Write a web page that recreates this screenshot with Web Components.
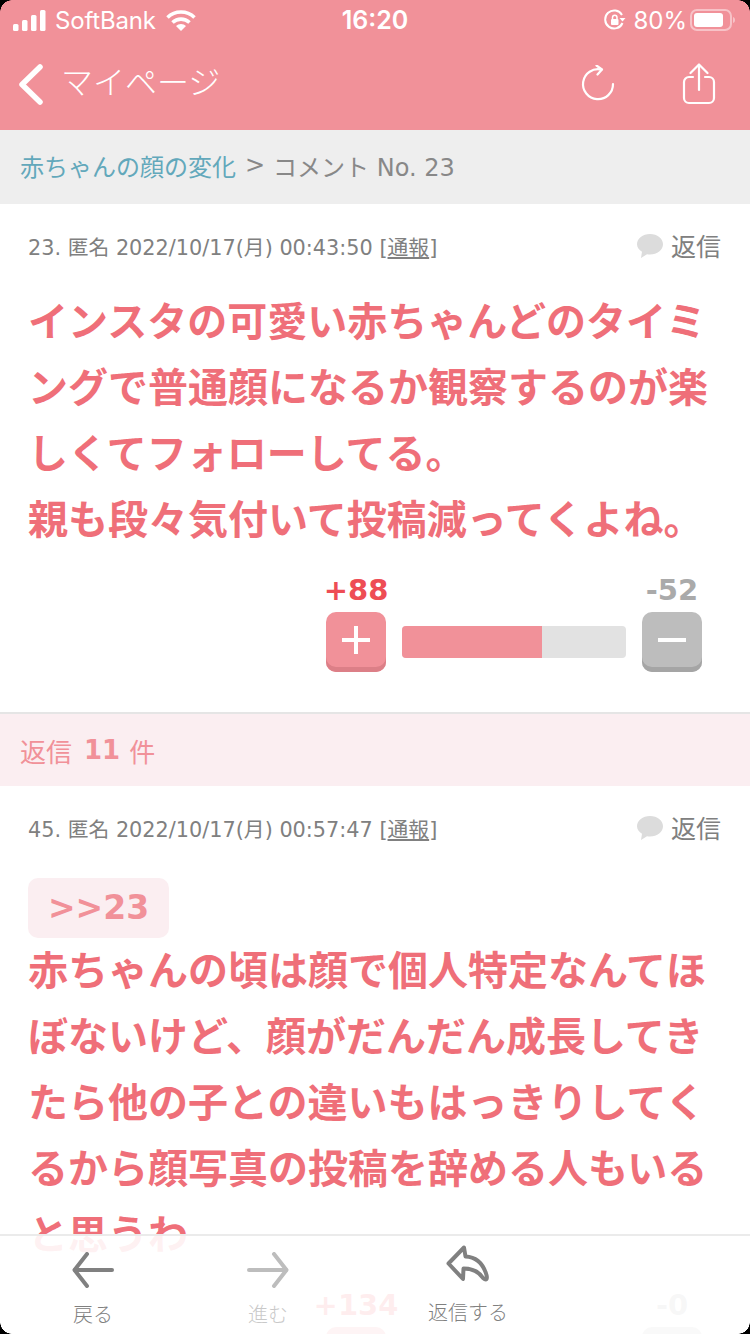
<!DOCTYPE html>
<html lang="ja"><head><meta charset="utf-8"><title>コメント</title>
<style>
html,body{margin:0;padding:0;background:#fff;}
body{font-family:"DejaVu Sans","Noto Sans CJK JP",sans-serif;width:750px;height:1334px;overflow:hidden;}
</style></head><body>
<app-screen>
  <status-bar></status-bar>
  <nav-bar title="マイページ"></nav-bar>
  <bread-crumb parent="赤ちゃんの顔の変化" current="コメント No. 23"></bread-crumb>
  <comment-card meta="23. 匿名 2022/10/17(月) 00:43:50" plus="+88" minus="-52" pct="62.5" first>インスタの可愛い赤ちゃんどのタイミングで普通顔になるか観察するのが楽しくてフォローしてる。<br>親も段々気付いて投稿減ってくよね。</comment-card>
  <reply-header count="11"></reply-header>
  <comment-card meta="45. 匿名 2022/10/17(月) 00:57:47" plus="+134" minus="-0" pct="100" quote=">>23">赤ちゃんの頃は顔で個人特定なんてほぼないけど、顔がだんだん成長してきたら他の子との違いもはっきりしてくるから顔写真の投稿を辞める人もいると思うわ</comment-card>
  <bottom-bar slot="overlay"></bottom-bar>
  <screen-corners slot="overlay"></screen-corners>
</app-screen>
<script>
const FONT='"DejaVu Sans","Noto Sans CJK JP",sans-serif';
function def(name,html,init){
  customElements.define(name,class extends HTMLElement{
    connectedCallback(){
      if(this.shadowRoot)return;
      const r=this.attachShadow({mode:'open'});
      r.innerHTML=typeof html==='function'?html(this):html;
      if(init)init(this,r);
    }
  });
}
def('app-screen',`<style>
:host{display:block;position:relative;width:750px;height:1334px;overflow:hidden;background:#fff;font-family:${FONT};}
</style><slot></slot><slot name="overlay"></slot>`);

def('status-bar',`<style>
:host{display:flex;align-items:center;height:40px;background:#f19199;color:#fff;font-family:Inter,"Liberation Sans",sans-serif;font-size:24px;position:relative;padding:0 15px 0 13px;box-sizing:border-box;}
.left,.right{display:flex;align-items:center;}
.right{margin-left:auto;}
.time{position:absolute;left:0;right:0;text-align:center;font-size:25px;font-weight:600;}
svg{display:block}
</style>
<div class="left">
<svg width="33" height="21" viewBox="0 0 33 21" fill="#fff"><rect x="0" y="14" width="5.5" height="7" rx="1.5"/><rect x="9" y="10" width="5.5" height="11" rx="1.5"/><rect x="18" y="5" width="5.5" height="16" rx="1.5"/><rect x="27" y="0" width="5.5" height="21" rx="1.5"/></svg>
<span style="margin-left:9px;letter-spacing:-.2px">SoftBank</span>
<svg style="margin-left:10px" width="30" height="21" viewBox="0 0 30 21" fill="none" stroke="#fff" stroke-width="3.6"><path d="M1.5 7.5a19.5 19.5 0 0 1 27 0"/><path d="M6.5 12.5a12.5 12.5 0 0 1 17 0"/><path d="M15 21l-5-5a7 7 0 0 1 10 0z" fill="#fff" stroke="none"/></svg>
</div>
<div class="time">16:20</div>
<div class="right">
<svg width="22" height="22" viewBox="0 0 22 22" fill="none" stroke="#fff" stroke-width="2"><path d="M18.5 14A9 9 0 1 1 18 6"/><path d="M15.5 9h6l-3 3.5z" fill="#fff" stroke="none"/><rect x="7" y="10" width="7.5" height="6" rx="1" fill="#fff" stroke="none"/><path d="M8.5 10V8.5a2.2 2.2 0 0 1 4.500 0V10" stroke-width="1.500"/></svg>
<span style="margin-left:7px">80%</span>
<svg style="margin-left:3px" width="45" height="22" viewBox="0 0 45 22"><rect x="1" y="1" width="40" height="20" rx="6" fill="none" stroke="#fff" stroke-opacity=".45" stroke-width="2"/><rect x="4" y="4" width="29" height="14" rx="3" fill="#fff"/><path d="M43 8c1.500.5 2 1.500 2 3s-.5 2.500-2 3z" fill="#fff" fill-opacity=".45"/></svg>
</div>`);

def('nav-bar',t=>`<style>
:host{display:flex;align-items:center;height:90px;background:#f19199;color:#fff;box-sizing:border-box;position:relative;}
.back{margin-left:17px;display:block}
.title{font-family:"Noto Sans CJK JP",sans-serif;font-weight:300;font-size:32px;margin-left:16px;margin-top:-10px;white-space:nowrap;}
.r{margin-left:auto;display:flex;align-items:center;margin-right:34px;}
svg{display:block}
</style>
<svg class="back" width="28" height="42" viewBox="0 0 28 42" fill="none" stroke="#fff" stroke-width="5.500" stroke-linecap="round" stroke-linejoin="round"><path d="M23 3L5 20.500 23 38"/></svg>
<span class="title">${t.getAttribute('title')}</span>
<div class="r">
<svg style="margin-top:-5px" width="34" height="36" viewBox="0 0 34 36" fill="none" stroke="#fff" stroke-width="2.200" stroke-linecap="round" stroke-linejoin="round"><path d="M20.500 4.600A15 15 0 1 0 32 19"/><path d="M15.500 0.500L21 4.500 16.500 9.500"/></svg>
<svg style="margin-left:67px;margin-top:-3px" width="34" height="42" viewBox="0 0 34 42" fill="none" stroke="#fff" stroke-width="2.200" stroke-linecap="round" stroke-linejoin="round"><path d="M11 14H7a5 5 0 0 0-5 5v16a5 5 0 0 0 5 5h20a5 5 0 0 0 5-5V19a5 5 0 0 0-5-5h-4"/><path d="M17 27V2"/><path d="M8.500 10L17 1.500 25.500 10"/></svg>
</div>`);

def('bread-crumb',t=>`<style>
:host{display:flex;align-items:center;height:74px;box-sizing:border-box;padding:0 0 4px 20px;background:#eeeeee;font-size:24px;color:#888;white-space:nowrap;}
.p{color:#62a8bb}.s{margin:0 8px 0 9px}
</style><span class="p">${t.getAttribute('parent')}</span><span class="s">&gt;</span><span>${t.getAttribute('current')}</span>`);

def('vote-bar',t=>`<style>
:host{display:grid;grid-template-columns:60px 224px 60px;column-gap:16px;row-gap:5px;justify-content:end;padding:23px 48px 40px 0;}
.n{font-weight:700;font-size:29px;line-height:34px;white-space:nowrap;justify-self:center;}
.plus{color:#ee4d55}.minus{color:#aaaaaa}
.b{width:60px;height:60px;border-radius:10px;display:flex;align-items:center;justify-content:center;box-sizing:border-box;padding-bottom:4px;}
.bp{background:#f19199;box-shadow:inset 0 -5px 0 #dc7f87;}
.bm{background:#bdbdbd;box-shadow:inset 0 -5px 0 #a5a5a5;}
.track{height:32px;align-self:start;margin-top:14px;background:#e2e2e2;border-radius:4px;overflow:hidden;}
.fill{height:100%;background:#f19199;}
svg{display:block}
</style>
<span class="n plus">${t.getAttribute('plus')}</span><span></span><span class="n minus">${t.getAttribute('minus')}</span>
<div class="b bp"><svg width="28" height="28" viewBox="0 0 28 28" fill="#fff"><rect x="12" y="0" width="4" height="28"/><rect x="0" y="12" width="28" height="4"/></svg></div>
<div class="track"><div class="fill" style="width:${t.getAttribute('pct')}%"></div></div>
<div class="b bm"><svg width="28" height="28" viewBox="0 0 28 28" fill="#fff"><rect x="0" y="12" width="28" height="4"/></svg></div>`);

def('comment-card',t=>`<style>
:host{display:block;background:#fff;${t.hasAttribute('first')?'border-bottom:2px solid #e5e5e5;':''}}
.meta{display:flex;align-items:center;height:34px;padding:26px 29px 0 28px;font-size:20.800px;color:#808080;white-space:nowrap;}
.meta>span:first-child{margin-top:-2px}
.reply{margin:-4px 0 0 auto;display:flex;align-items:center;font-size:25px;color:#808080;}
.reply svg{margin:2px 8px 0 0;display:block}
.quote{display:inline-block;box-sizing:border-box;width:141px;height:60px;margin:32px 0 -1px 28px;border-radius:10px;background:#fbeef1;color:#f19199;font-weight:700;font-size:33px;line-height:60px;text-align:center;vertical-align:top;}
.body{margin:${t.hasAttribute('quote')?'-2px':'22px'} 28px 0 28px;font-family:"Noto Sans CJK JP",sans-serif;font-weight:700;font-size:40px;line-height:66px;color:#ef6f79;}
</style>
<div class="meta"><span>${t.getAttribute('meta')} [<u>通報</u>]</span>
<span class="reply"><svg width="26" height="24" viewBox="0 0 26 24"><path d="M13 0c7.200 0 13 4.600 13 10.300S20.200 20.600 13 20.600c-1 0-2-.1-3-.3L4 24l1-6.200C2 16 0 13.300 0 10.300 0 4.600 5.800 0 13 0z" fill="#dcdcdc"/></svg>返信</span></div>
${t.hasAttribute('quote')?`<div><span class="quote">${t.getAttribute('quote').replace(/>/g,'&gt;')}</span></div>`:''}
<div class="body"><slot></slot></div>
<vote-bar plus="${t.getAttribute('plus')}" minus="${t.getAttribute('minus')}" pct="${t.getAttribute('pct')}"></vote-bar>`);

def('reply-header',t=>`<style>
:host{display:flex;align-items:center;height:72px;padding-left:20px;background:#fbeef1;color:#f19199;font-size:26px;white-space:nowrap;}
b{margin:0 9px 0 12px;font-size:26px}
</style>返信<b>${t.getAttribute('count')}</b>件`);

def('bottom-bar',`<style>
:host{position:absolute;left:0;right:0;bottom:0;height:100px;box-sizing:border-box;border-top:2px solid rgba(232,232,232,.85);background:rgba(255,255,255,.9);display:grid;grid-template-columns:186px 164px 236px 1fr;font-family:"Noto Sans CJK JP",sans-serif;font-weight:300;font-size:20px;}
.i{display:flex;flex-direction:column;align-items:center;color:#808080;}
.i svg{display:block}
.off{color:#c9c9c9}
.a{padding-top:16px}.a span{margin-top:11px;line-height:30px}
.c{padding-top:9px}.c span{margin-top:15px;line-height:30px}
</style>
<div class="i a"><svg width="42" height="36" viewBox="0 0 42 36" fill="none" stroke="#808080" stroke-width="4" stroke-linecap="round" stroke-linejoin="round"><path d="M40 18H3"/><path d="M15 2L2.500 18 15 34"/></svg><span>戻る</span></div>
<div class="i a off"><svg width="42" height="36" viewBox="0 0 42 36" fill="none" stroke="#bdbdbd" stroke-width="4" stroke-linecap="round" stroke-linejoin="round"><path d="M2 18h37"/><path d="M27 2l12.500 16L27 34"/></svg><span>進む</span></div>
<div class="i c"><svg width="44" height="37" viewBox="0 0 44 37" fill="none" stroke="#808080" stroke-width="4" stroke-linejoin="round" stroke-linecap="round"><path d="M18 2.500L2.500 18.500 17 34l.5-10.500c9 0 15 2.500 19.500 9.500 3.500 3 4.500 1 3.500-3C37 18 29 12 19.500 11.500z"/></svg><span>返信する</span></div>
<div></div>`);

def('screen-corners',`<style>
:host{position:absolute;inset:0;pointer-events:none;display:block;}
i{position:absolute;width:12px;height:12px;}
.tl{left:0;top:0;background:radial-gradient(circle at 100% 100%,transparent 11.500px,#000 12px);}
.tr{right:0;top:0;background:radial-gradient(circle at 0 100%,transparent 11.500px,#000 12px);}
.bl{left:0;bottom:0;background:radial-gradient(circle at 100% 0,transparent 11.500px,#000 12px);}
.br{right:0;bottom:0;background:radial-gradient(circle at 0 0,transparent 11.500px,#000 12px);}
</style><i class="tl"></i><i class="tr"></i><i class="bl"></i><i class="br"></i>`);
</script>
</body></html>
